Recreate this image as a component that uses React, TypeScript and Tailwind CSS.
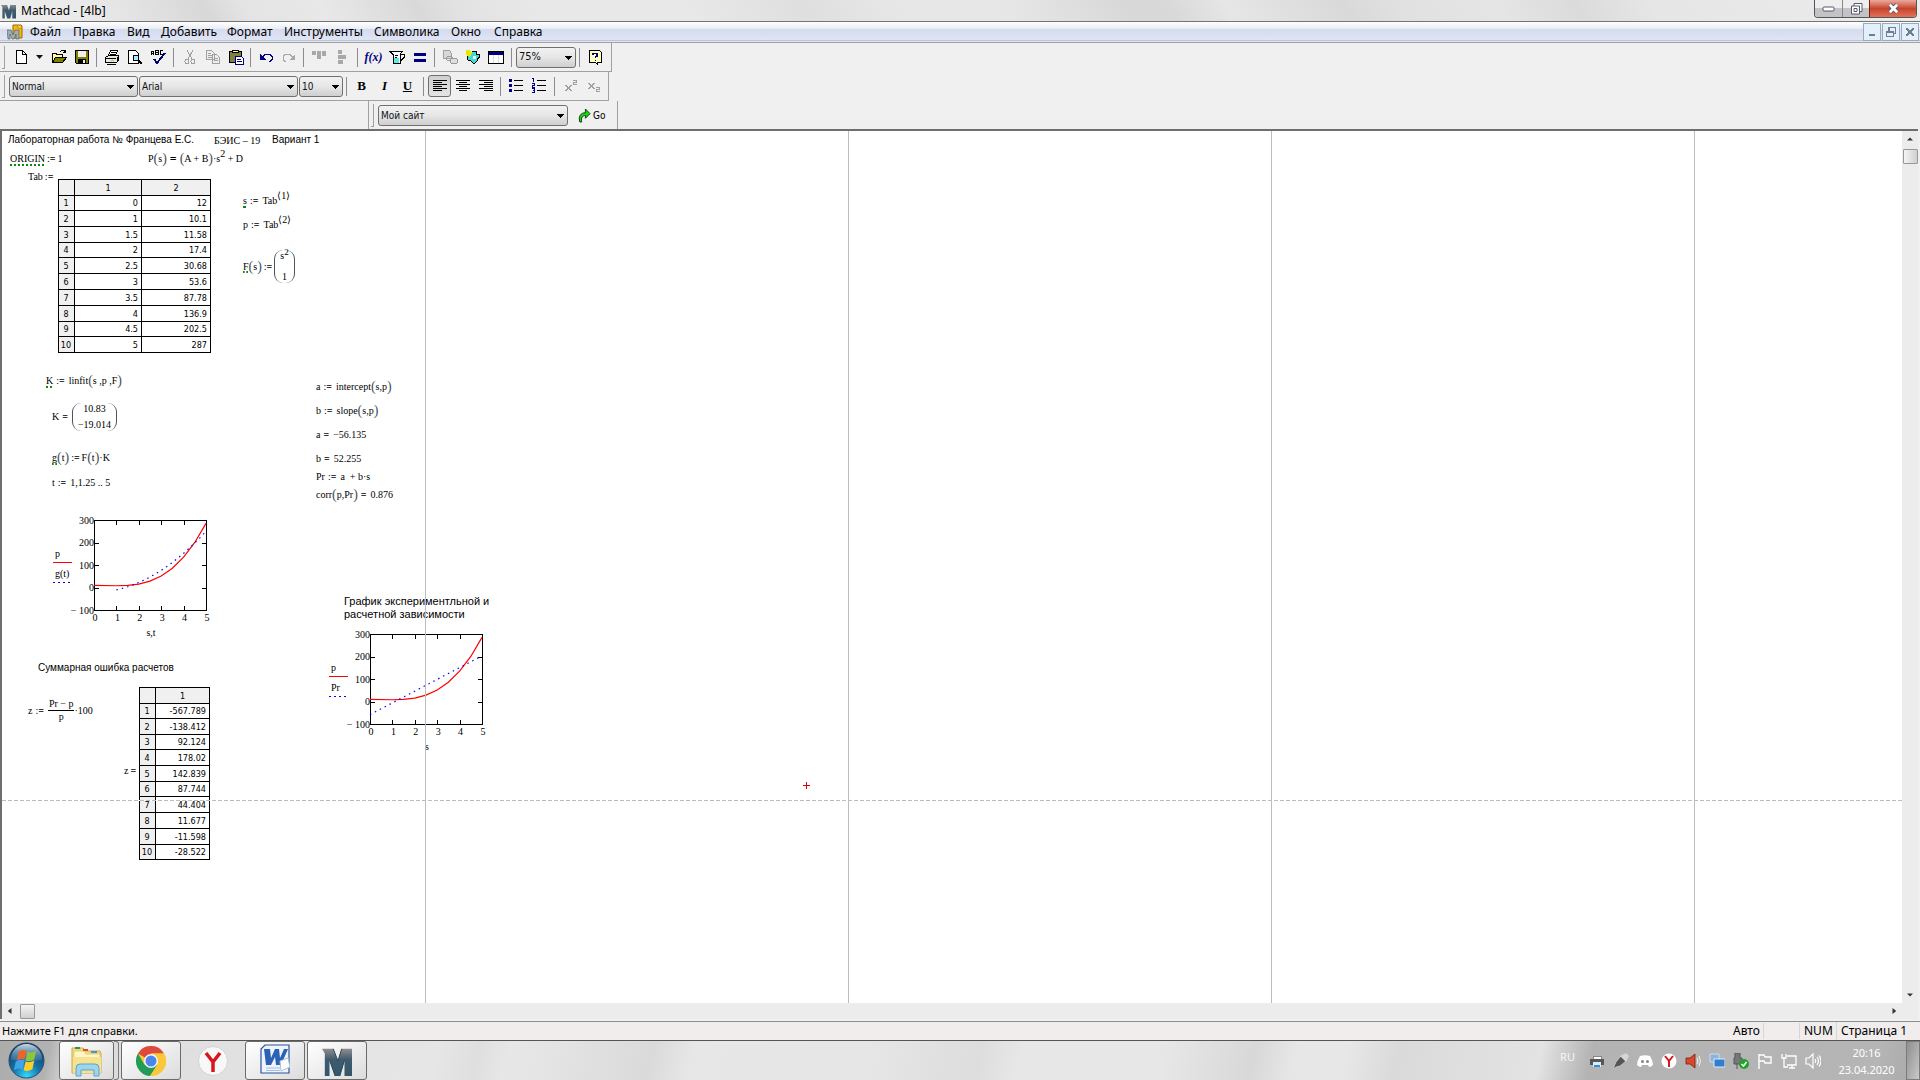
import React from "react";

/* ---------- shared pieces ---------- */

type IconProps = { children: React.ReactNode; size?: string };

function Pix({ children, size = "h-4 w-4" }: IconProps) {
  return (
    <svg viewBox="0 0 16 16" className={`${size} shrink-0`} shapeRendering="crispEdges" fill="none" aria-hidden="true">
      {children}
    </svg>
  );
}

function ToolButton({ label, active, children }: { label: string; active?: boolean; children: React.ReactNode }) {
  return (
    <button
      aria-label={label}
      className={
        active
          ? "flex h-[22px] w-[23px] items-center justify-center rounded-[3px] border border-[#6f6f6f] bg-gradient-to-b from-[#d0d0d0] to-[#e4e4e4]"
          : "flex h-[22px] w-[23px] items-center justify-center"
      }
    >
      {children}
    </button>
  );
}

function Sep({ wide }: { wide?: boolean }) {
  return <div className={wide ? "mx-[4px] h-[19px] w-px shrink-0 bg-[#8c8c8c]" : "mx-[3px] h-[19px] w-px shrink-0 bg-[#8c8c8c]"} />;
}

function Grip() {
  return <div className="mr-[4px] ml-[2px] h-[23px] w-[3px] shrink-0 border-r border-b border-[#a0a0a0]" />;
}

function Combo({ label, value, width, text = "text-[10px]" }: { label: string; value: string; width: string; text?: string }) {
  return (
    <label className={`relative flex h-[21px] shrink-0 ${width}`}>
      <select
        aria-label={label}
        defaultValue={value}
        className={`w-full appearance-none rounded-[3px] border border-[#707070] bg-gradient-to-b from-[#f2f2f2] via-[#e6e6e6] to-[#cfcfcf] pl-[2px] font-['DejaVu_Sans_Condensed','Noto_Sans',sans-serif] text-[#111] ${text}`}
      >
        <option>{value}</option>
      </select>
      <svg viewBox="0 0 7 4" className="pointer-events-none absolute top-[9px] right-[4px] h-[4px] w-[7px]" shapeRendering="crispEdges">
        <path d="M0 0h7L3.5 4z" fill="#000" />
      </svg>
    </label>
  );
}

/* ---------- title and menu ---------- */

function MathcadMark({ className }: { className: string }) {
  return (
    <svg viewBox="0 0 32 32" className={className} aria-hidden="true">
      <defs>
        <linearGradient id="mark" x1="0" y1="0" x2="0" y2="1">
          <stop offset="0" stopColor="#8d8d90" />
          <stop offset="0.4" stopColor="#3f5b6e" />
          <stop offset="1" stopColor="#33566b" />
        </linearGradient>
      </defs>
      <path d="M0 3h12l5 13 4-13h11v29h-8V15l-5 17h-5L8 15v17H3V8z" fill="url(#mark)" />
      <path d="M12 3l5 13 4-13M8 15l6 17M24 15l-5 17" stroke="#24404f" fill="none" />
    </svg>
  );
}

function TitleBar() {
  return (
    <header className="flex h-[22px] shrink-0 items-center border-b border-[#747474] bg-[linear-gradient(62deg,#eeeeee_0%,#e9e9e9_5%,#d8d8d8_11%,#e4e4e4_13%,#e8e8e8_17%,#d9d9d9_22%,#e2e2e2_24%,#e8e8e8_28%,#e8e8e8_36%,#dfdfdf_42%,#e7e7e7_47%,#e7e7e7_52%,#d8d8d8_59%,#d9d9d9_61%,#e6e6e6_64%,#d9d9d9_70%,#e1e1e1_73%,#e5e5e5_78%,#dbdbdb_82%,#e6e6e6_86%,#ececec_100%)]">
      <MathcadMark className="ml-px h-[16px] w-[15px]" />
      <h1 className="ml-[5px] flex-1 font-['Noto_Sans',sans-serif] text-[12px] leading-[20px] text-black">Mathcad - [4lb]</h1>
      <div className="mr-[3px] flex h-[18px] self-start overflow-hidden rounded-b-[4px] border border-t-0 border-[#555]">
        <button aria-label="Свернуть" className="flex w-[28px] items-center justify-center border-r border-[#888] bg-gradient-to-b from-[#eeeeee] from-50% to-[#c3c3c6] to-50%">
          <svg viewBox="0 0 13 6" className="h-[6px] w-[13px]"><rect x="1" y="1" width="11" height="4" rx="1" fill="#fff" stroke="#555a6e" /></svg>
        </button>
        <button aria-label="Восстановить" className="flex w-[27px] items-center justify-center border-r border-[#7a1f14] bg-gradient-to-b from-[#eeeeee] from-50% to-[#c3c3c6] to-50%">
          <svg viewBox="0 0 13 12" className="h-[12px] w-[13px]" fill="#fff" stroke="#555a6e"><path d="M4 .5h8v8H4z" /><path d="M1.500 3h8v8h-8z" /><path d="M4 5.500h3v3H4z" /></svg>
        </button>
        <button aria-label="Закрыть" className="flex w-[46px] items-center justify-center bg-gradient-to-b from-[#e9a99f] via-[#c8432b] to-[#e0725a]">
          <svg viewBox="0 0 14 12" className="h-[11px] w-[13px]"><path d="M3 2l8 8M11 2l-8 8" stroke="#555a6e" strokeWidth="5" /><path d="M3 2l8 8M11 2l-8 8" stroke="#fff" strokeWidth="3" /></svg>
        </button>
      </div>
    </header>
  );
}

const menus: [string, string][] = [
  ["Файл", "w-[43px]"],
  ["Правка", "w-[54px]"],
  ["Вид", "w-[34px]"],
  ["Добавить", "w-[66px]"],
  ["Формат", "w-[57px]"],
  ["Инструменты", "w-[90px]"],
  ["Символика", "w-[77px]"],
  ["Окно", "w-[43px]"],
  ["Справка", "w-[60px]"],
];

function MenuBar() {
  const box = "flex h-[18px] w-[18px] items-center justify-center border border-[#9aa9bb] bg-[#e3effa]";
  return (
    <nav className="flex h-[21px] shrink-0 items-center border-b border-[#a3a3a3] bg-[linear-gradient(#ffffff,#e9ecf4_35%,#d4dbee_36%,#e0e5f6_90%,#b9c3d6_92%,#f4f4f4)]">
      <svg viewBox="0 0 16 16" className="ml-[7px] h-[16px] w-[16px]" aria-hidden="true">
        <path d="M6 1h8l1 1v12H6z" fill="#f7b90c" stroke="#a06a00" />
        <path d="M11 1v3h4" fill="#fff0a0" stroke="#a06a00" strokeWidth=".7" />
        <path d="M0 6h4l2 5 2-5h4v9H9v-5l-2 5H5l-2-5v5H1z" fill="#a3adb5" stroke="#46545f" strokeWidth=".6" />
      </svg>
      <div className="ml-[7px] flex flex-1 font-['Noto_Sans',sans-serif] text-[12px] leading-[18px] text-black">
        {menus.map(([name, width]) => (
          <button key={name} className={`${width} text-left whitespace-nowrap`}>{name}</button>
        ))}
      </div>
      <div className="mr-px flex gap-px">
        <button aria-label="Свернуть документ" className={box}><Pix size="h-3 w-3"><path d="M4 12h8" stroke="#6d7f92" strokeWidth="3" /></Pix></button>
        <button aria-label="Восстановить документ" className={box}><Pix size="h-3 w-3"><path d="M2 7h9v7H2zM5 6V2h9v8h-3M2 8h9" stroke="#6d7f92" strokeWidth="2" /></Pix></button>
        <button aria-label="Закрыть документ" className={box}><Pix size="h-3 w-3"><path d="M3 3l10 10M13 3L3 13" stroke="#6d7f92" strokeWidth="3" /></Pix></button>
      </div>
    </nav>
  );
}

/* ---------- toolbars ---------- */

function StandardBar() {
  return (
    <div role="toolbar" className="flex h-[29px] w-[612px] items-center border-r border-b border-[#a0a0a0]">
      <Grip />
      <ToolButton label="Создать"><Pix><path d="M3.500 1.500h6l4 4v9h-10z" fill="#fff" stroke="#000" /><path d="M9.500 1.500v4h4" stroke="#000" /></Pix></ToolButton>
      <button aria-label="Шаблоны" className="flex w-[15px] justify-center"><svg viewBox="0 0 7 4" className="h-[4px] w-[7px]"><path d="M0 0h7L3.500 4z" fill="#111" /></svg></button>
      <ToolButton label="Открыть"><Pix><path d="M1 13.500V4.500h4l1 1h5v3" fill="#ffffa0" stroke="#000" /><path d="M1.500 13.500l3-5h11l-4 5z" fill="#808000" stroke="#000" /><path d="M9 2.500l2-1h2l1 2M12 3.500h3M14.500 1v3" stroke="#000" /></Pix></ToolButton>
      <ToolButton label="Сохранить"><Pix><path d="M1.500 1.500h13v13h-12l-1-1z" fill="#808000" stroke="#000" /><path d="M4 2h8v6H4z" fill="#eee" /><path d="M4 10h8v4H4z" fill="#000" /><path d="M9 11h2v3H9z" fill="#eee" /></Pix></ToolButton>
      <Sep />
      <ToolButton label="Печать"><Pix><path d="M4.500 6.500l2-5h7l-2 5" fill="#fff" stroke="#000" /><path d="M7 3.500h5M6 5.500h5" stroke="#000" /><path d="M1.500 8.500l3-2h10v5l-2 2h-11z" fill="#e8e8e8" stroke="#000" /><path d="M1 9.500h11M13 8v5M3 15.500h9" stroke="#000" /><path d="M7 11.500h3" stroke="#cc0" /></Pix></ToolButton>
      <ToolButton label="Просмотр"><Pix><path d="M1.500 1.500h7l3 3v10h-10z" fill="#fff" stroke="#000" /><circle cx="9" cy="9" r="3" fill="#a0f0ff" stroke="#000" /><path d="M11 11l4 4" stroke="#000" strokeWidth="2" /></Pix></ToolButton>
      <ToolButton label="Орфография"><Pix><path d="M1.500 6V2.500h2V6M2 4.500h1.500M5.500 1v4.500h2.500V1.500H5.500M6 3.500h2M12.500 1.500H10.500v4h2" stroke="#000" /><path d="M4 10l3 4 8-10" stroke="#000080" strokeWidth="1.800" /></Pix></ToolButton>
      <Sep wide />
      <ToolButton label="Вырезать"><Pix><path d="M5 1l5 9M11 1L6 10" stroke="#a0a0a0" /><circle cx="5" cy="12.500" r="2" stroke="#a0a0a0" /><circle cx="11" cy="12.500" r="2" stroke="#a0a0a0" /></Pix></ToolButton>
      <ToolButton label="Копировать"><Pix><path d="M1.500 1.500h5l3 3v6h-8zM7.500 5.500h4l3 3v6h-7z" fill="#eee" stroke="#a0a0a0" /><path d="M3 4.500h3M3 6.500h4M3 8.500h4M9 9.500h4M9 11.500h4" stroke="#a0a0a0" /></Pix></ToolButton>
      <ToolButton label="Вставить"><Pix><path d="M1.500 2.500h12v11h-12z" fill="#808040" stroke="#000" /><path d="M4.500 3.500v-2h6v2z" fill="#ffff80" stroke="#000" /><path d="M7.500 7.500h6l2 2v6h-8z" fill="#fff" stroke="#000080" /><path d="M9 10.500h4M9 12.500h5" stroke="#000080" /></Pix></ToolButton>
      <Sep />
      <ToolButton label="Отменить"><Pix><path d="M4 8.500l3-3h5l2 2v3l-2 2h-1" stroke="#000080" /><path d="M2 5v6h6z" fill="#000080" /></Pix></ToolButton>
      <ToolButton label="Повторить"><Pix><path d="M12 8.500l-3-3H4l-2 2v3l2 2h1" stroke="#a8a8a8" /><path d="M14 5v6H8z" fill="#a8a8a8" /></Pix></ToolButton>
      <Sep />
      <ToolButton label="Выровнять по горизонтали"><Pix><path d="M1 2h4v4H1zM6 2h4v8H6zM11 2h4v5h-4z" fill="#a8a8a8" /></Pix></ToolButton>
      <ToolButton label="Выровнять по вертикали"><Pix><path d="M4 1h4v4H4zM4 6h8v4H4zM4 11h5v4H4z" fill="#a8a8a8" /></Pix></ToolButton>
      <Sep wide />
      <ToolButton label="Функция"><span className="font-['Liberation_Serif',serif] text-[12px] leading-4 font-bold text-[#000080] italic">f(x)</span></ToolButton>
      <ToolButton label="Единицы"><Pix><path d="M1 2.500h12l-2 3v9H4v-9z" fill="#fff" stroke="#000" /><path d="M5 9h5v5H5z" fill="#60e8e8" /><path d="M12 5.500h3v3l-3 3M6 6.500h3M6 8.500h2" stroke="#000" /></Pix></ToolButton>
      <ToolButton label="Вычислить"><Pix><path d="M2 5h12M2 11h12" stroke="#000080" strokeWidth="3" /></Pix></ToolButton>
      <Sep />
      <ToolButton label="Гиперссылка"><Pix><path d="M1.500 1.500h6l2 3v5h-8z" fill="#d8d8d8" stroke="#a0a0a0" /><rect x="4.500" y="7.500" width="6" height="4" rx="2" stroke="#999" /><rect x="8.500" y="9.500" width="7" height="5" rx="2" fill="#ddd" stroke="#999" /></Pix></ToolButton>
      <ToolButton label="Компоненты"><Pix><path d="M4 3h3l1-1h3v3h3l1 3-3 2v2l-3 3-3-3-3-1-1-5z" fill="#40d8d8" stroke="#000" /><path d="M1 1h4l2 3-2 4-4-2z" fill="#e8e800" /><path d="M8 7h3v3H8z" fill="#d8ffff" /></Pix></ToolButton>
      <ToolButton label="Окно"><Pix><path d="M.5 2.500h15v12H.5z" fill="#fff" stroke="#000" /><path d="M1 4h14" stroke="#000080" strokeWidth="3" /><path d="M5.500 6v8M10.500 6v8" stroke="#ddd" /></Pix></ToolButton>
      <Sep wide />
      <Combo label="Масштаб" value="75%" width="w-[60px]" text="text-[11px]" />
      <Sep />
      <ToolButton label="Справка"><Pix><path d="M2.500 1.500h10l2 2v10h-4v2l-2-2h-6z" fill="#ffffc0" stroke="#000" /><path d="M6 6V4.500h4v3H8.500V9M8 11.500h1" stroke="#000080" strokeWidth="1.500" /></Pix></ToolButton>
    </div>
  );
}

function FormatBar() {
  const letter = "font-['Liberation_Serif',serif] text-[13px] leading-4 font-bold text-black";
  return (
    <div role="toolbar" className="flex h-[29px] w-[609px] items-center border-r border-b border-[#a0a0a0]">
      <Grip />
      <Combo label="Стиль" value="Normal" width="w-[129px]" />
      <div className="w-px" />
      <Combo label="Шрифт" value="Arial" width="w-[159px]" />
      <div className="w-px" />
      <Combo label="Размер" value="10" width="w-[44px]" />
      <Sep />
      <ToolButton label="Полужирный"><span className={letter}>B</span></ToolButton>
      <ToolButton label="Курсив"><span className={`${letter} italic`}>I</span></ToolButton>
      <ToolButton label="Подчеркнутый"><span className={`${letter} underline`}>U</span></ToolButton>
      <Sep wide />
      <ToolButton label="По левому краю" active><Pix><path d="M1 2.500h14M1 4.500h9M1 6.500h14M1 8.500h9M1 10.500h14M1 12.500h9" stroke="#000" /></Pix></ToolButton>
      <ToolButton label="По центру"><Pix><path d="M1 2.500h14M4 4.500h8M1 6.500h14M4 8.500h8M1 10.500h14M4 12.500h8" stroke="#000" /></Pix></ToolButton>
      <ToolButton label="По правому краю"><Pix><path d="M1 2.500h14M6 4.500h9M1 6.500h14M6 8.500h9M1 10.500h14M6 12.500h9" stroke="#000" /></Pix></ToolButton>
      <Sep />
      <ToolButton label="Маркеры"><Pix><path d="M1 1h3v3H1zM1 6h3v3H1zM1 11h3v3H1z" fill="#000080" /><path d="M6 2.500h9M6 7.500h9M6 12.500h9" stroke="#000" /></Pix></ToolButton>
      <ToolButton label="Нумерация"><Pix><path d="M2.500 0v4M1 .5h1M1 5.500h2.500v1.500H1.500v2H4M1 10.500h2.500v4H1M2 12.500h1" stroke="#000080" /><path d="M6 2.500h9M6 7.500h9M6 12.500h9" stroke="#000" /></Pix></ToolButton>
      <Sep wide />
      <ToolButton label="Верхний индекс"><Pix><path d="M3 7l5 6M8 7l-5 6" stroke="#a0a0a0" strokeWidth="1.500" /><path d="M10 2.500h3v2h-2.500v2H14" stroke="#a0a0a0" /></Pix></ToolButton>
      <ToolButton label="Нижний индекс"><Pix><path d="M3 5l5 6M8 5l-5 6" stroke="#a0a0a0" strokeWidth="1.500" /><path d="M10 9.500h3v2h-2.500v2H14" stroke="#a0a0a0" /></Pix></ToolButton>
    </div>
  );
}

function ResourceBar() {
  return (
    <div className="flex h-[28px]">
      <div className="w-[369px] border-r border-[#a0a0a0]" />
      <div role="toolbar" className="flex w-[249px] items-center border-r border-[#a0a0a0]">
        <Grip />
        <Combo label="Адрес" value="Мой сайт" width="w-[190px]" />
        <button className="ml-[10px] flex items-center gap-[2px] font-['DejaVu_Sans_Condensed','Noto_Sans',sans-serif] text-[10px] text-black">
          <svg viewBox="0 0 14 16" className="h-[15px] w-[13px]" aria-hidden="true"><path d="M2 15C0 9 3 5 8 5V1l5 5-5 5V8C5 8 3 10 4 15z" fill="#17d417" stroke="#063806" /></svg>
          Go
        </button>
      </div>
    </div>
  );
}

/* ---------- worksheet ---------- */

function Region({ at, children }: { at: string; children: React.ReactNode }) {
  return <div className={`absolute flex items-center whitespace-nowrap ${at}`}>{children}</div>;
}

function Paren({ children }: { children: React.ReactNode }) {
  return (
    <>
      <span className="text-[14px] leading-3 text-[#4a5560]">(</span>
      {children}
      <span className="text-[14px] leading-3 text-[#4a5560]">)</span>
    </>
  );
}

function Eq({ define, tight }: { define?: boolean; tight?: boolean }) {
  return (
    <span className={tight ? "mx-[2px]" : "mr-[4px] ml-[3px]"}>
      {define ? ":" : ""}
      <b>=</b>
    </span>
  );
}

function Wavy({ children }: { children: React.ReactNode }) {
  return <span className="underline decoration-[#0a8a0a] decoration-dotted decoration-2 underline-offset-2">{children}</span>;
}

function Column({ rows, gap = "gap-[4px]" }: { rows: React.ReactNode[]; gap?: string }) {
  return (
    <span className={`flex flex-col items-center justify-around rounded-[9px] border-x border-[#4a5560] px-[5px] leading-3 ${gap}`}>
      {rows.map((r, i) => (
        <span key={i}>{r}</span>
      ))}
    </span>
  );
}

type TableProps = { caption: string; columns: string[]; rows: string[][]; widths: string[]; short: number[] };

function DataTable({ caption, columns, rows, widths, short }: TableProps) {
  return (
    <table aria-label={caption} className="table-fixed border-collapse bg-white font-['DejaVu_Sans_Condensed','Noto_Sans',sans-serif] text-[9px] leading-[10px] text-black">
      <thead>
        <tr className="h-[16px]">
          <th className={`${widths[0]} border border-black bg-[#f0f0f0] p-0`} />
          {columns.map((c, i) => (
            <th key={c} scope="col" className={`${widths[i + 1]} border border-black bg-[#f0f0f0] p-0 font-normal`}>{c}</th>
          ))}
        </tr>
      </thead>
      <tbody>
        {rows.map((row, r) => (
          <tr key={r} className={short.includes(r) ? "h-[15px]" : "h-[16px]"}>
            <th scope="row" className="border border-black bg-[#f0f0f0] p-0 pr-px font-normal">{r + 1}</th>
            {row.map((v, c) => (
              <td key={c} className="border border-black p-0 pr-[3px] text-right">{v}</td>
            ))}
          </tr>
        ))}
      </tbody>
    </table>
  );
}

const tab = [
  ["0", "12"], ["1", "10.1"], ["1.5", "11.58"], ["2", "17.4"], ["2.5", "30.68"],
  ["3", "53.6"], ["3.5", "87.78"], ["4", "136.9"], ["4.5", "202.5"], ["5", "287"],
];
const errors = ["-567.789", "-138.412", "92.124", "178.02", "142.839", "87.744", "44.404", "11.677", "-11.598", "-28.522"].map((v) => [v]);

const fitted = Array.from({ length: 17 }, (_, i) => 1 + i * 0.25).map((t) => [t, 10.83 * t * t - 19.014]);
const linear = [[0, -56.135], [5, 205.14]];

function Plot({ title, second, axis, dotted }: { title: string; second: React.ReactNode; axis: string; dotted: number[][] }) {
  const px = (s: number) => 41 + s * 22.4;
  const py = (v: number) => 74 - v * 0.225;
  const line = (pts: number[][]) => pts.map(([a, b]) => `${px(a)},${py(b)}`).join(" ");
  return (
    <svg role="img" aria-label={title} viewBox="0 0 162 124" className="h-[124px] w-[162px] font-['Liberation_Serif',serif] text-[10px]" fill="#000">
      <g shapeRendering="crispEdges" stroke="#000" fill="none">
        <path d="M41.500 6.500h112v90h-112z" />
        <path d="M63.500 7v4M86.500 7v4M108.500 7v4M131.500 7v4M63.500 92v4M86.500 92v4M108.500 92v4M131.500 92v4" />
        <path d="M42 29.500h4M42 51.500h4M42 74.500h4M149 29.500h4M149 51.500h4M149 74.500h4" />
      </g>
      <polyline points={line(tab.map(([a, b]) => [Number(a), Number(b)]))} fill="none" stroke="#f00" strokeWidth="1.200" />
      <polyline points={line(dotted)} fill="none" stroke="#00f" strokeDasharray="1.500 4" strokeWidth="1.200" />
      {[300, 200, 100, 0].map((v) => (
        <text key={v} x="41" y={py(v) + 3} textAnchor="end">{v}</text>
      ))}
      <text x="41" y="100" textAnchor="end">− 100</text>
      {[0, 1, 2, 3, 4, 5].map((v) => (
        <text key={v} x={px(v) + 1} y="107" textAnchor="middle">{v}</text>
      ))}
      <text x="98" y="122" textAnchor="middle">{axis}</text>
      <text x="2" y="43">p</text>
      <path d="M0 48.500h19" stroke="#f00" shapeRendering="crispEdges" />
      <text x="2" y="63">{second}</text>
      <path d="M0 68.500h17" stroke="#00f" strokeDasharray="2 3" shapeRendering="crispEdges" />
    </svg>
  );
}

function Worksheet() {
  return (
    <main className="relative min-w-0 flex-1 overflow-hidden bg-white font-['Liberation_Serif',serif] text-[10px] leading-3 text-black">
      <Region at="left-[6px] top-[3px] font-['Liberation_Sans',sans-serif]">Лабораторная работа № Францева Е.С.</Region>
      <Region at="left-[212px] top-[4px]">БЭИС – 19</Region>
      <Region at="left-[270px] top-[3px] font-['Liberation_Sans',sans-serif]">Вариант 1</Region>

      <Region at="left-[8px] top-[22px]"><Wavy>ORIGIN</Wavy><Eq define tight /><span>1</span></Region>
      <Region at="left-[146px] top-[22px]">P<Paren>s</Paren><span className="mx-[3px] text-[12px] font-black">=</span><Paren>A + B</Paren>·s<sup className="text-[10px] leading-3">2</sup>&nbsp;+ D</Region>
      <Region at="left-[26px] top-[40px]">Tab<Eq define tight /></Region>
      <Region at="left-[56px] top-[48px]">
        <DataTable caption="Tab" columns={["1", "2"]} rows={tab} widths={["w-[16px]", "w-[67px]", "w-[69px]"]} short={[0, 3, 8]} />
      </Region>
      <Region at="left-[241px] top-[64px]"><Wavy>s</Wavy><Eq define />Tab<sup className="text-[10px] leading-3">⟨1⟩</sup></Region>
      <Region at="left-[241px] top-[88px]">p<Eq define />Tab<sup className="text-[10px] leading-3">⟨2⟩</sup></Region>
      <Region at="left-[241px] top-[119px]">
        <Wavy>F</Wavy><Paren>s</Paren><Eq define tight />
        <Column gap="gap-[9px]" rows={[<span key="s">s<sup className="text-[9px] leading-3">2</sup></span>, "1"]} />
      </Region>

      <Region at="left-[44px] top-[244px]"><Wavy>K</Wavy><Eq define />linfit<Paren>s ,p ,F</Paren></Region>
      <Region at="left-[50px] top-[272px]">K<Eq /><Column rows={["10.83", "−19.014"]} /></Region>
      <Region at="left-[50px] top-[321px]"><Wavy>g</Wavy><Paren>t</Paren><Eq define tight />F<Paren>t</Paren>·K</Region>
      <Region at="left-[50px] top-[346px]">t<Eq define />1,1.25 .. 5</Region>

      <Region at="left-[314px] top-[250px]">a<Eq define />intercept<Paren>s,p</Paren></Region>
      <Region at="left-[314px] top-[274px]">b<Eq define />slope<Paren>s,p</Paren></Region>
      <Region at="left-[314px] top-[298px]">a<Eq />−56.135</Region>
      <Region at="left-[314px] top-[322px]">b<Eq />52.255</Region>
      <Region at="left-[314px] top-[340px]">Pr<Eq define />a&nbsp; + b·s</Region>
      <Region at="left-[314px] top-[358px]">corr<Paren>p,Pr</Paren><Eq />0.876</Region>

      <Region at="left-[51px] top-[383px]"><Plot title="p и g(t)" second="g(t)" axis="s,t" dotted={fitted} /></Region>
      <Region at="left-[342px] top-[464px] font-['Liberation_Sans',sans-serif] text-[11px] leading-[13px]">
        <p>График экспериментльной и<br />расчетной зависимости</p>
      </Region>
      <Region at="left-[327px] top-[497px]"><Plot title="p и Pr" second="Pr" axis="s" dotted={linear} /></Region>

      <Region at="left-[36px] top-[531px] font-['Liberation_Sans',sans-serif]">Суммарная ошибка расчетов</Region>
      <Region at="left-[26px] top-[567px]">
        z<Eq define />
        <span className="flex flex-col items-center"><span className="border-b border-black px-px">Pr − p</span><span>p</span></span>
        <span>·100</span>
      </Region>
      <Region at="left-[122px] top-[634px]">z<Eq tight /></Region>
      <Region at="left-[137px] top-[556px]">
        <DataTable caption="z" columns={["1"]} rows={errors} widths={["w-[16px]", "w-[54px]"]} short={[0, 2, 5, 9]} />
      </Region>

      {/* page boundaries */}
      <div className="absolute inset-y-0 left-[423px] w-px bg-[#bdbdbd]" />
      <div className="absolute inset-y-0 left-[846px] w-px bg-[#bdbdbd]" />
      <div className="absolute inset-y-0 left-[1269px] w-px bg-[#bdbdbd]" />
      <div className="absolute inset-y-0 left-[1692px] w-px bg-[#bdbdbd]" />
      <div className="absolute inset-x-0 top-[669px] h-px bg-[repeating-linear-gradient(90deg,#bdbdbd_0_4px,#fff_4px_6px)]" />

      <svg viewBox="0 0 7 7" className="absolute top-[651px] left-[801px] h-[7px] w-[7px]" shapeRendering="crispEdges" aria-hidden="true">
        <path d="M3.500 0v7M0 3.500h7" stroke="#e00000" />
      </svg>
    </main>
  );
}

function Arrow({ d, label }: { d: string; label: string }) {
  return (
    <button aria-label={label} className="flex h-[16px] w-[16px] items-center justify-center">
      <svg viewBox="0 0 8 8" className="h-[6px] w-[6px]"><path d={d} fill="#333" /></svg>
    </button>
  );
}

/* ---------- status bar and taskbar ---------- */

function StatusBar() {
  return (
    <footer className="flex h-[19px] shrink-0 items-center border-t border-[#8e8e8e] bg-[#f0edec] font-['Noto_Sans',sans-serif] text-[12px] leading-[18px] text-black">
      <span className="flex-1 pl-[2px] text-[11px]">Нажмите F1 для справки.</span>
      <span className="w-[30px]">Авто</span>
      <span className="h-[16px] w-[37px] border-x border-[#d6d6d6]" />
      <span className="w-[36px] pl-[4px]">NUM</span>
      <span className="w-[84px] border-l border-[#d6d6d6] pl-[4px] whitespace-nowrap">Страница 1</span>
    </footer>
  );
}

const task = "flex h-[39px] items-center justify-center rounded-[3px] border border-[#6b6b6b] bg-gradient-to-br from-[#ffffff] to-[#dcdcdc]";

function Taskbar() {
  return (
    <footer className="flex h-[40px] shrink-0 items-center border-t border-[#555] bg-[linear-gradient(102deg,#acacac_0px,#b2b2b2_50px,#dddddd_75px,#e6e6e6_430px,#dfdfdf_470px,#e7e7e7_500px,#e4e4e4_540px,#dadada_640px,#e7e7e7_680px,#e6e6e6_850px,#dddddd_960px,#e7e7e7_1000px,#e7e7e7_1140px,#d8d8d8_1230px,#e7e7e7_1270px,#e7e7e7_1320px,#dadada_1370px,#e3e3e3_1510px,#b3b3b3_1560px,#b5b5b5_1840px,#a8a8a8)]">
      <button aria-label="Пуск" className="ml-[8px] h-[37px] w-[37px]">
        <svg viewBox="0 0 38 38" className="h-[37px] w-[37px]">
          <defs>
            <radialGradient id="orb" cx=".5" cy=".95" r=".9"><stop offset="0" stopColor="#35d8ff" /><stop offset=".45" stopColor="#1571a8" /><stop offset="1" stopColor="#153a5e" /></radialGradient>
            <linearGradient id="gloss" x1="0" y1="0" x2="0" y2="1"><stop offset="0" stopColor="#dcebf5" stopOpacity=".9" /><stop offset="1" stopColor="#6f9cc0" stopOpacity=".2" /></linearGradient>
          </defs>
          <circle cx="19" cy="19" r="18" fill="url(#orb)" stroke="#284d68" />
          <path d="M3 18a16 16 0 0132 0q-16 5-32 0z" fill="url(#gloss)" />
          <path d="M11 10q4-3 8-1l-2 9q-4-2-8 1z" fill="#f0642a" />
          <path d="M20 10q4 2 9-1l-2 9q-5 3-9 1z" fill="#8cc63c" />
          <path d="M8 20q4-3 9-1l-2 9q-5-2-9 1z" fill="#3fa4e8" />
          <path d="M18 20q4 2 9-1l-2 9q-5 3-9 1z" fill="#ffcf28" />
        </svg>
      </button>
      <button aria-label="Проводник" className={`${task} ml-[14px] w-[55px]`}>
        <svg viewBox="0 0 32 32" className="h-[32px] w-[32px]">
          <path d="M1 3h11l2 3h15l1 2v20H1z" fill="#f3dc83" stroke="#c9a94c" />
          <path d="M3 6h10l2 3h14v4H3z" fill="#fff6c4" stroke="#d8bb5c" strokeWidth=".6" />
          <path d="M4 3h5" stroke="#2c9b48" strokeWidth="2" />
          <path d="M12 5h5" stroke="#e05028" strokeWidth="2" /><path d="M20 7h6" stroke="#3c98dc" strokeWidth="2" />
          <path d="M2 12h28v16H2z" fill="#f6e391" />
          <path d="M5 31V23q0-4 4-4h15q4 0 4 4v8h-5v-6H10v6z" fill="#9fd4ee" stroke="#5aa5cc" />
        </svg>
      </button>
      <div className="h-[39px] w-[5px] rounded-r-[3px] border border-l-0 border-[#7b7b7b] bg-[#dcdcdc]" />
      <button aria-label="Chrome" className={`${task} ml-[2px] w-[60px]`}>
        <svg viewBox="0 0 30 30" className="h-[30px] w-[30px]">
          <circle cx="15" cy="15" r="15" fill="#fbc73b" />
          <path d="M15 15L2 7.500A15 15 0 0128 7.500H15z" fill="#dc4b3e" />
          <path d="M2 7.500A15 15 0 0014 30l7.500-11.500L15 15 8.500 18.700z" fill="#1f9d58" />
          <path d="M15 7.500h13a15 15 0 01-14 22.500l7.500-11.300z" fill="#fbc73b" />
          <circle cx="15" cy="15" r="7" fill="#f4f4f4" /><circle cx="15" cy="15" r="5.500" fill="#4a86ee" />
        </svg>
      </button>
      <button aria-label="Яндекс" className="ml-[2px] flex w-[60px] items-center justify-center">
        <svg viewBox="0 0 30 30" className="h-[30px] w-[30px]">
          <circle cx="15" cy="15" r="14.500" fill="#f8f8f8" stroke="#d2d2d2" />
          <path d="M8 7l7 9 7-9M15 15v11" fill="none" stroke="#d8151c" strokeWidth="3.500" />
        </svg>
      </button>
      <button aria-label="Word" className={`${task} ml-[2px] w-[60px]`}>
        <svg viewBox="0 0 30 30" className="mb-[4px] h-[30px] w-[30px]">
          <path d="M5 1h24v28H1V5z" fill="#eef4fc" stroke="#2a5599" strokeWidth="1.200" />
          <path d="M4 5h6l1 9 4-9h4l1 9 4-9h4l-7 16h-5l-1-8-4 8H6z" fill="#2b62b4" />
          <path d="M6 24h14M6 26.500h14" stroke="#a9bfdf" />
          <path d="M20 17l8-3 2 9-9 4z" fill="#fff" stroke="#a9bfdf" />
        </svg>
      </button>
      <button aria-label="Mathcad" className={`${task} ml-[2px] w-[60px]`}><MathcadMark className="h-[30px] w-[32px]" /></button>

      <div className="flex-1" />

      <span className="mb-[6px] font-['Noto_Sans',sans-serif] text-[11px] text-[#f4f4f4]">RU</span>
      <div className="ml-[14px] flex items-center gap-[8px]">
        <Pix><path d="M4 3h8v4H4z" fill="#fff" stroke="#888" /><path d="M1 6h14v6H1z" fill="#565656" /><path d="M4 9h8v5H4z" fill="#d6eefb" /><path d="M5 13h6" stroke="#2a90d8" strokeWidth="2" /></Pix>
        <svg viewBox="0 0 16 16" className="h-4 w-4"><path d="M0 16l3-7 5-6 5 5-6 5-4 1z" fill="#555" stroke="#ddd" strokeWidth=".6" /><path d="M7 3l6-3 3 3-3 6z" fill="#d5d5d5" /></svg>
        <svg viewBox="0 0 16 16" className="h-4 w-4"><path d="M3 3q5-1.500 10 0 3 5 3 9-2 2-4 2l-1-2H5l-1 2q-2 0-4-2 0-4 3-9z" fill="#fff" /><circle cx="5.500" cy="8.500" r="1.500" fill="#888" /><circle cx="10.500" cy="8.500" r="1.500" fill="#888" /></svg>
        <svg viewBox="0 0 16 16" className="h-4 w-4"><circle cx="8" cy="8" r="7.500" fill="#fff" /><path d="M4 3l4 5 4-5M8 8v6" fill="none" stroke="#d8151c" strokeWidth="2" /></svg>
        <svg viewBox="0 0 16 16" className="h-4 w-4"><path d="M1 5h4l5-4v14l-5-4H1z" fill="#d9482b" stroke="#7b1e10" strokeWidth=".8" /><path d="M12 5q2 3 0 6M14 3q3 5 0 10" fill="none" stroke="#f0f0f0" /></svg>
        <svg viewBox="0 0 16 16" className="h-4 w-4"><path d="M1 1h9v8H1z" fill="#89b4dc" stroke="#e5eef5" strokeWidth=".7" /><path d="M5 6h11v8H5z" fill="#2e7fd0" stroke="#e0edf8" /></svg>
        <svg viewBox="0 0 16 16" className="h-4 w-4"><path d="M2 0h5v5h2v6H1V5h1zM4 11v5" fill="#777" stroke="#555" /><circle cx="11" cy="11" r="5" fill="#24a12c" /><path d="M8.500 11l2 2 3-4" fill="none" stroke="#fff" strokeWidth="1.500" /></svg>
        <svg viewBox="0 0 16 16" className="h-4 w-4" fill="none" stroke="#fff" strokeWidth="1.400"><path d="M2 1v15M2 2h5l1 2h6v6H8L7 8H2" /></svg>
        <svg viewBox="0 0 16 16" className="h-4 w-4" fill="none" stroke="#fff" strokeWidth="1.300"><path d="M6 3h9v9H6M8 15h6M11 12v3M1 1v4h4V1M3 5v9h4" /></svg>
        <svg viewBox="0 0 16 16" className="h-4 w-4" fill="none" stroke="#fff" strokeWidth="1.200"><path d="M1 5h3l4-4v14l-4-4H1zM10 6q1.500 2 0 4M12 4q3 4 0 8M14 2.500q4 5.500 0 11" /></svg>
      </div>
      <div className="ml-[10px] w-[71px] text-center font-['Noto_Sans',sans-serif] text-[11px] leading-[17px] text-white">
        20:16
        <br />
        23.04.2020
      </div>
      <button aria-label="Свернуть все окна" className="ml-[4px] h-[39px] w-[14px] border border-[#7c7c7c] bg-gradient-to-br from-[#8f8f8f] to-[#c9c9c9]" />
    </footer>
  );
}

export default function App() {
  return (
    <div className="flex h-screen flex-col overflow-hidden bg-[#f0f0f0]">
      <TitleBar />
      <MenuBar />
      <div className="shrink-0">
        <StandardBar />
        <FormatBar />
        <ResourceBar />
      </div>
      <div className="mr-[2px] flex min-h-0 flex-1 border-t-2 border-l-2 border-[#6e6e6e]">
        <div className="flex min-w-0 flex-1 flex-col">
          <Worksheet />
          <div className="flex h-[16px] shrink-0 items-center bg-[#ececec]">
            <Arrow label="Влево" d="M6 0v8L1 4z" />
            <div className="ml-[2px] h-[15px] w-[15px] rounded-[1px] border border-[#989898] bg-gradient-to-b from-[#f4f4f4] to-[#d0d0d0]" />
            <div className="flex-1" />
            <Arrow label="Вправо" d="M2 0v8l5-4z" />
          </div>
        </div>
        <div className="flex w-[16px] shrink-0 flex-col items-center bg-[#ececec]">
          <Arrow label="Вверх" d="M0 6h8L4 2z" />
          <div className="mt-[2px] h-[15px] w-[15px] rounded-[1px] border border-[#989898] bg-gradient-to-r from-[#f4f4f4] to-[#d0d0d0]" />
          <div className="flex-1" />
          <Arrow label="Вниз" d="M0 2h8L4 6z" />
          <div className="h-[16px]" />
        </div>
      </div>
      <div className="h-[2px] shrink-0" />
      <StatusBar />
      <Taskbar />
    </div>
  );
}
